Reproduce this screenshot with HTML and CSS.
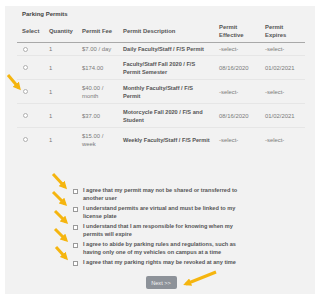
FILE: index.html
```html
<!DOCTYPE html>
<html lang="en">
  <head>
    <meta charset="UTF-8" />
    <meta name="viewport" content="width=device-width, initial-scale=1.0" />
    <title>Parking Permits</title>
    <link rel="stylesheet" href="styles.css">
  </head>

  <body>
    <div class="panel">
      <div class="panel-title">Parking Permits</div>

      <!-- Permit table -->

      <table class="permits">
        <colgroup>
          <col class="col-select" />
          <col class="col-qty" />
          <col class="col-fee" />
          <col class="col-desc" />
          <col class="col-eff" />
          <col class="col-exp" />
        </colgroup>
        <thead>
          <tr>
            <th>Select</th>
            <th>Quantity</th>
            <th>Permit Fee</th>
            <th>Permit Description</th>
            <th>Permit<br />Effective</th>
            <th>Permit<br />Expires</th>
          </tr>
        </thead>
        <tbody>
          <tr>
            <td><span class="radio"></span></td>
            <td>1</td>
            <td>$7.00 / day</td>
            <td class="desc">Daily Faculty/Staff / F/S Permit</td>
            <td>-select-</td>
            <td>-select-</td>
          </tr>
          <tr>
            <td><span class="radio"></span></td>
            <td>1</td>
            <td>$174.00</td>
            <td class="desc">Faculty/Staff Fall 2020 / F/S Permit Semester</td>
            <td>08/16/2020</td>
            <td>01/02/2021</td>
          </tr>
          <tr>
            <td><span class="radio"></span></td>
            <td>1</td>
            <td>$40.00 /<br />month</td>
            <td class="desc">Monthly Faculty/Staff / F/S Permit</td>
            <td>-select-</td>
            <td>-select-</td>
          </tr>
          <tr>
            <td><span class="radio"></span></td>
            <td>1</td>
            <td>$37.00</td>
            <td class="desc">Motorcycle Fall 2020 / F/S and Student</td>
            <td>08/16/2020</td>
            <td>01/02/2021</td>
          </tr>
          <tr>
            <td><span class="radio"></span></td>
            <td>1</td>
            <td>$15.00 /<br />week</td>
            <td class="desc">Weekly Faculty/Staff / F/S Permit</td>
            <td>-select-</td>
            <td>-select-</td>
          </tr>
        </tbody>
      </table>

      <!-- Agreements -->

      <ul class="agree">
        <li><span class="check"></span><span>I agree that my permit may not be shared or transferred to another user</span></li>
        <li><span class="check"></span><span>I understand permits are virtual and must be linked to my license plate</span></li>
        <li><span class="check"></span><span>I understand that I am responsible for knowing when my permits will expire</span></li>
        <li><span class="check"></span><span>I agree to abide by parking rules and regulations, such as having only one of my vehicles on campus at a time</span></li>
        <li><span class="check"></span><span>I agree that my parking rights may be revoked at any time</span></li>
      </ul>

      <div class="actions">
        <button class="next-button">Next &gt;&gt;</button>
      </div>
    </div>

    <!-- Callout arrows drawn over the page -->

    <svg class="callouts" width="321" height="300" viewBox="0 0 321 300">
      <defs>
        <marker id="head" markerUnits="userSpaceOnUse" markerWidth="8" markerHeight="8"
          viewBox="0 0 8 8" refX="5" refY="4" orient="auto">
          <path d="M0,0 L8,4 L0,8 z" fill="#f5b50f" />
        </marker>
      </defs>
      <g stroke="#f5b50f" stroke-width="3" marker-end="url(#head)">
        <line x1="8" y1="75" x2="19" y2="88" />
        <line x1="53" y1="174" x2="65" y2="187" />
        <line x1="53" y1="192" x2="65" y2="204" />
        <line x1="55" y1="211" x2="66" y2="222" />
        <line x1="55" y1="229" x2="66" y2="240" />
        <line x1="56" y1="247" x2="66" y2="258" />
        <line x1="216" y1="272" x2="186" y2="284" />
      </g>
    </svg>
  </body>
</html>
```

FILE: styles.css
```css
body {
  margin: 0;
  font-family: "Liberation Sans", Arial, sans-serif;
  background: #ffffff;
}

* {
  box-sizing: border-box;
}

/* --- Panel --- */

.panel {
  margin: 6px 6px 6px 5px;
  padding: 4px 10px 5px 12px;
  background: #f2f2f2;
  height: 288px;
}

.panel-title {
  font-size: 6px;
  line-height: 8px;
  font-weight: bold;
  color: #444;
  padding-left: 5px;
  margin-bottom: 1px;
}

/* --- Table --- */

.permits {
  width: 288px;
  table-layout: fixed;
  border-collapse: collapse;
  font-size: 5.9px;
  line-height: 8px;
}

.col-select { width: 27px; }
.col-qty { width: 33px; }
.col-fee { width: 41px; }
.col-desc { width: 96px; }
.col-eff { width: 46px; }
.col-exp { width: 45px; }

.permits th {
  text-align: left;
  font-weight: bold;
  color: #555;
  padding: 3.5px 5px;
  border-bottom: 1px solid #a9a9a9;
  vertical-align: middle;
}

.permits td {
  color: #7a7a7a;
  padding: 3.5px 5px;
  border-bottom: 1px solid #e6e6e6;
  vertical-align: middle;
}

.permits tbody tr:first-child td {
  padding: 2px 5px;
}

.permits tbody tr:last-child td {
  border-bottom: none;
}

.permits td.desc {
  font-size: 5.6px;
  font-weight: bold;
  color: #555;
  padding-right: 3px;
}

.radio {
  display: block;
  width: 5px;
  height: 5px;
  border: 1px solid #b0b0b0;
  border-radius: 50%;
  background: #fff;
  margin-left: 1px;
}

/* --- Agreements --- */

.agree {
  list-style: none;
  width: 176px;
  margin: 35px auto 0;
  padding: 0;
  font-size: 5.6px;
  line-height: 8px;
  font-weight: bold;
  color: #555;
}

.agree li {
  display: flex;
  align-items: flex-start;
  margin-bottom: 2px;
}

.check {
  flex: none;
  width: 5px;
  height: 5px;
  border: 1px solid #9a9a9a;
  background: #fff;
  margin: 3px 5px 0 0;
}

/* --- Button --- */

.actions {
  display: flex;
  justify-content: center;
  margin-top: 10px;
}

.next-button {
  font-family: inherit;
  font-size: 5.6px;
  color: #f4f4f4;
  background: #8d9299;
  border: none;
  border-radius: 2px;
  width: 31px;
  height: 13px;
  padding: 0;
}

/* --- Callouts --- */

.callouts {
  position: absolute;
  top: 0;
  left: 0;
  pointer-events: none;
}
```
